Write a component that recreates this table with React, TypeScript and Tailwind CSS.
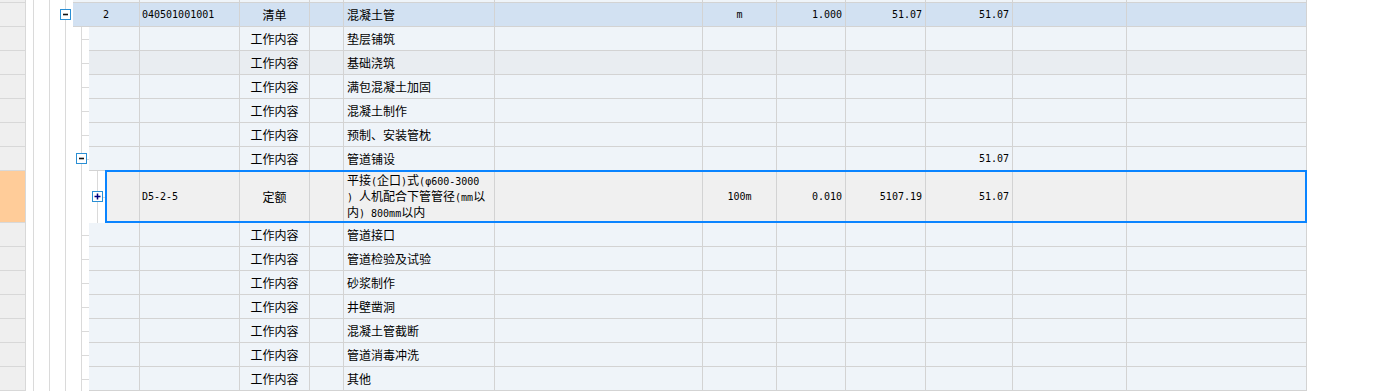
import React from "react";

// grid line colours
const GRID = "border-[#d3d3d3]";
const MONO = "font-['DejaVu_Sans_Mono',monospace] text-[10px]";

type Item = {
  seq?: string;
  code?: string;
  cat: string;
  name: React.ReactNode;
  unit?: string;
  qty?: string;
  price?: string;
  total?: string;
};

function Mixed({ text }: { text: string }) {
  const parts = text.split(/([\x20-\x7e\u03c6]+)/).filter((p) => p !== "");
  return (
    <>
      {parts.map((p, i) =>
        /^[\x20-\x7e\u03c6]+$/.test(p) ? (
          <span key={i} className={MONO}>
            {p}
          </span>
        ) : (
          <span key={i}>{p}</span>
        )
      )}
    </>
  );
}

function MinusBox() {
  return (
    <div className="w-[11px] h-[11px] border border-[#2a8fd4] bg-white flex items-center justify-center">
      <svg width="9" height="9" viewBox="0 0 9 9">
        <path d="M2 4.5H7" stroke="#111" strokeWidth="1.6" />
      </svg>
    </div>
  );
}

function PlusBox() {
  return (
    <div className="w-[11px] h-[11px] border border-[#2a8fd4] bg-white flex items-center justify-center">
      <svg width="9" height="9" viewBox="0 0 9 9">
        <path d="M1.5 4.5H7.5M4.5 1.5V7.5" stroke="#000080" strokeWidth="1.5" />
      </svg>
    </div>
  );
}

function Cells({ item, first, bg }: { item: Item; first: string; bg: string }) {
  const cell = `shrink-0 h-full border-r border-b ${GRID} flex items-center`;
  return (
    <div className={`flex h-full ${bg}`}>
      <div className={`${cell} ${first} justify-center ${MONO}`}>{item.seq}</div>
      <div className={`${cell} w-[100px] pl-[2px] ${MONO}`}>{item.code}</div>
      <div className={`${cell} w-[70px] justify-center`}>{item.cat}</div>
      <div className={`${cell} w-[34px]`} />
      <div className={`${cell} w-[151px] pl-[3px]`}>{item.name}</div>
      <div className={`${cell} w-[208px]`} />
      <div className={`${cell} w-[74px] justify-center ${MONO}`}>{item.unit}</div>
      <div className={`${cell} w-[69px] justify-end pr-[3px] ${MONO}`}>{item.qty}</div>
      <div className={`${cell} w-[80px] justify-end pr-[3px] ${MONO}`}>{item.price}</div>
      <div className={`${cell} w-[87px] justify-end pr-[3px] ${MONO}`}>{item.total}</div>
      <div className={`${cell} w-[114px]`} />
      <div className={`${cell} w-[180px]`} />
    </div>
  );
}

function Side({ className = "" }: { className?: string }) {
  return <div className={`w-[26px] shrink-0 h-full border-r border-b border-[#d8d8d8] ${className}`} />;
}

// tree gutter pieces
const G = "border-[#dadada]";

function ChildRow({ item, hover, box }: { item: Item; hover?: boolean; box?: boolean }) {
  return (
    <div className="flex h-[24px]">
      <Side className="bg-[#efefef]" />
      <div className="w-[7px] shrink-0" />
      <div className={`w-[16px] shrink-0 border-l ${G}`} />
      <div className={`w-[16px] shrink-0 border-l ${G}`} />
      <div className={`w-[16px] shrink-0 border-l ${G}`} />
      <div className={`w-[8px] shrink-0 h-full border-l ${G} flex items-center relative`}>
        <div className="h-px w-full bg-[#dadada]" />
        {box && (
          <div className="absolute left-[-6px] top-[6px]">
            <MinusBox />
          </div>
        )}
      </div>
      <Cells item={item} first="w-[51px]" bg={hover ? "bg-[#e9edf1]" : "bg-[#eff4f9]"} />
    </div>
  );
}

const upper: Item[] = [
  { cat: "工作内容", name: "垫层铺筑" },
  { cat: "工作内容", name: "基础浇筑" },
  { cat: "工作内容", name: "满包混凝土加固" },
  { cat: "工作内容", name: "混凝土制作" },
  { cat: "工作内容", name: "预制、安装管枕" },
];

const lower: Item[] = [
  { cat: "工作内容", name: "管道接口" },
  { cat: "工作内容", name: "管道检验及试验" },
  { cat: "工作内容", name: "砂浆制作" },
  { cat: "工作内容", name: "井壁凿洞" },
  { cat: "工作内容", name: "混凝土管截断" },
  { cat: "工作内容", name: "管道消毒冲洗" },
  { cat: "工作内容", name: "其他" },
];

export default function App() {
  return (
    <div className="w-[1381px] h-[391px] overflow-hidden bg-white text-black text-[12px] font-['Noto_Sans_CJK_SC','Noto_Sans',sans-serif]">
      {/* cut-off row above */}
      <div className="flex h-[3px]">
        <Side className="bg-[#efefef]" />
        <div className="w-[7px] shrink-0" />
        <div className={`w-[16px] shrink-0 border-l ${G}`} />
        <div className={`w-[16px] shrink-0 border-l ${G}`} />
        <div className={`w-[8px] shrink-0 border-l ${G}`} />
        <Cells item={{ cat: "", name: "" }} first="w-[67px]" bg="bg-[#eff4f9]" />
      </div>

      {/* 清单 row */}
      <div className="flex h-[24px]">
        <Side className="bg-[#efefef]" />
        <div className="w-[7px] shrink-0" />
        <div className={`w-[16px] shrink-0 border-l ${G}`} />
        <div className={`w-[16px] shrink-0 border-l ${G}`} />
        <div className={`w-[8px] shrink-0 border-l ${G} relative`}>
          <div className="absolute left-[-6px] top-[6px]">
            <MinusBox />
          </div>
        </div>
        <Cells
          item={{
            seq: "2",
            code: "040501001001",
            cat: "清单",
            name: "混凝土管",
            unit: "m",
            qty: "1.000",
            price: "51.07",
            total: "51.07",
          }}
          first="w-[67px]"
          bg="bg-[#d2e1f2]"
        />
      </div>

      {upper.map((it, i) => (
        <ChildRow key={i} item={it} hover={i === 1} />
      ))}
      <ChildRow item={{ cat: "工作内容", name: "管道铺设", total: "51.07" }} box />

      {/* selected 定额 row */}
      <div className="flex h-[52px]">
        <Side className="bg-[#ffcc99]" />
        <div className="w-[7px] shrink-0" />
        <div className={`w-[16px] shrink-0 border-l ${G}`} />
        <div className={`w-[16px] shrink-0 border-l ${G}`} />
        <div className={`w-[16px] shrink-0 border-l ${G}`} />
        <div className={`w-[8px] shrink-0 border-l ${G}`} />
        <div className="w-[8px] shrink-0" />
        <div className={`w-[8px] shrink-0 h-full border-l ${G} flex items-center relative`}>
          <div className="h-px w-full bg-[#dadada]" />
          <div className="absolute left-[-6px] top-[20px]">
            <PlusBox />
          </div>
        </div>
        <div className="relative h-full">
          <Cells
            item={{
              code: "D5-2-5",
              cat: "定额",
              name: (
                <div className="leading-[14px] whitespace-pre">
                  <div>
                    <Mixed text="平接(企口)式(φ600-3000" />
                  </div>
                  <div>
                    <Mixed text=") 人机配合下管管径(mm以" />
                  </div>
                  <div>
                    <Mixed text="内) 800mm以内" />
                  </div>
                </div>
              ),
              unit: "100m",
              qty: "0.010",
              price: "5107.19",
              total: "51.07",
            }}
            first="w-[35px]"
            bg="bg-[#f0f0f0]"
          />
          <div className="absolute top-[-1px] left-0 right-0 bottom-0 border-2 border-[#0a84ff] pointer-events-none" />
        </div>
      </div>

      {lower.map((it, i) => (
        <ChildRow key={i} item={it} />
      ))}
    </div>
  );
}
